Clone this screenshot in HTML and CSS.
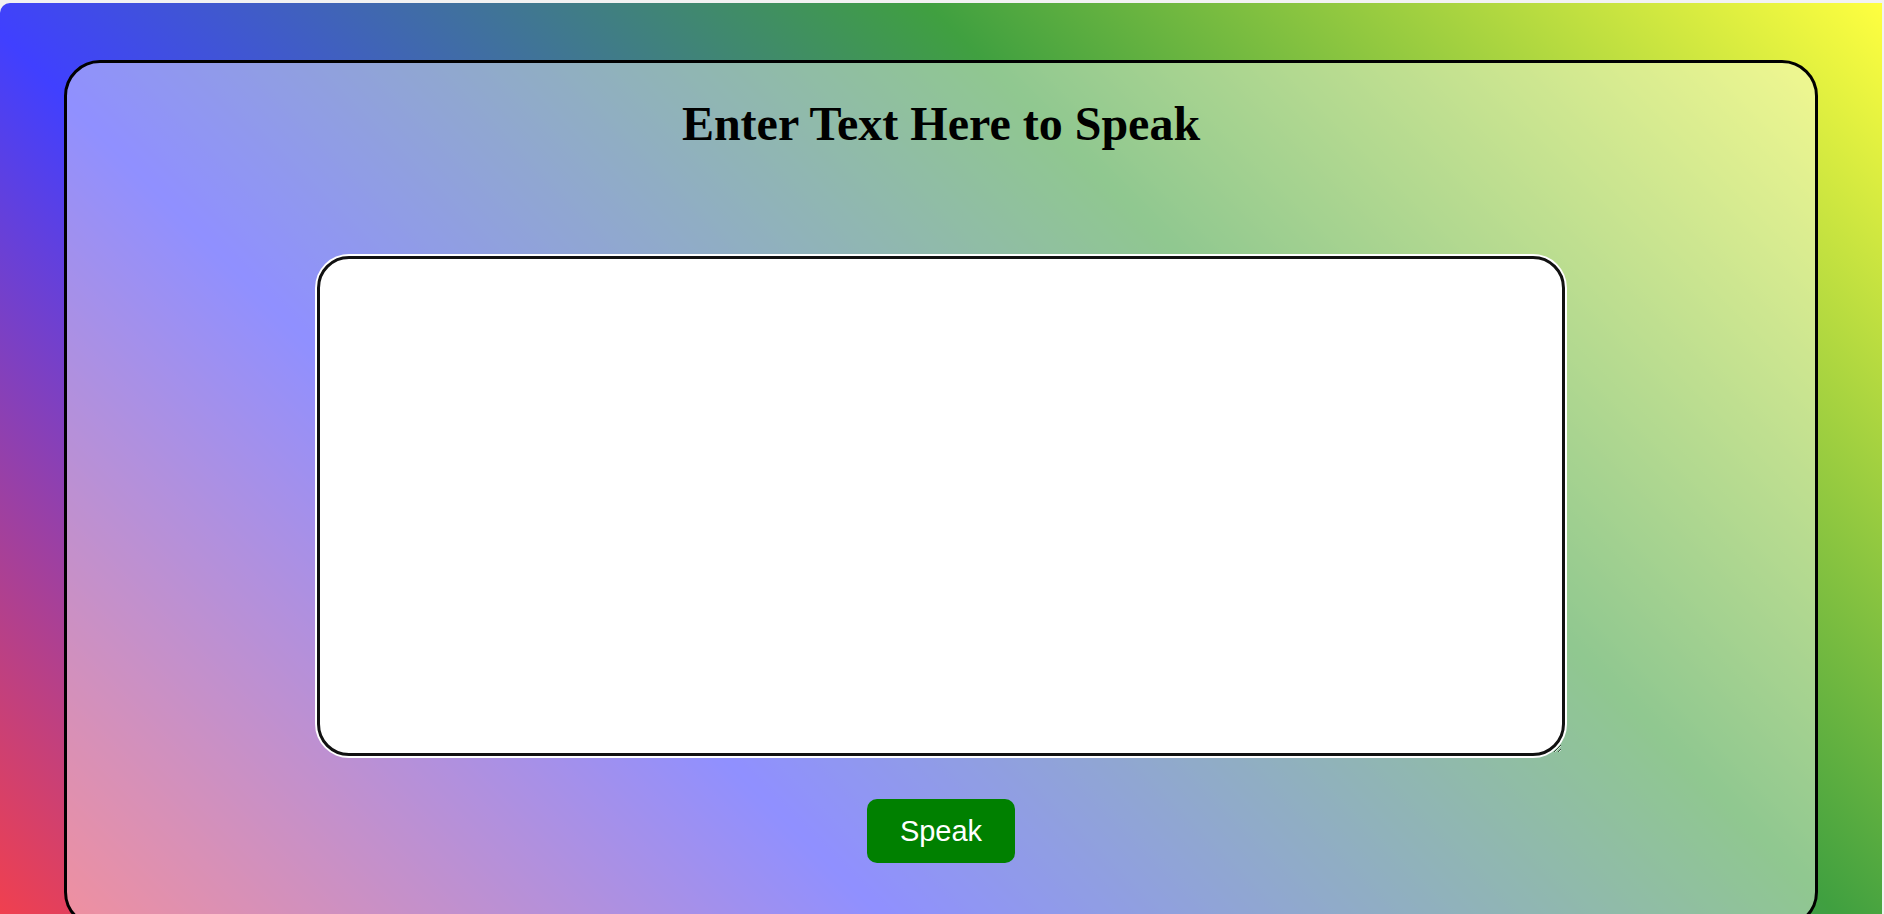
FILE: index.html
```html
<!DOCTYPE html>
<html lang="en">
<head>
<meta charset="utf-8">
<title>Text to Speech</title>
<link rel="stylesheet" href="styles.css">
</head>
<body>
<div class="page">
  <main class="card">
    <h1 class="title">Enter Text Here to Speak</h1>
    <textarea class="text-input" autofocus></textarea>
    <button class="speak-btn" type="button">Speak</button>
  </main>
</div>
</body>
</html>
```

FILE: styles.css
```css
html, body {
  margin: 0;
  padding: 0;
}

body {
  background: #f2f2f2;
  font-family: "Liberation Serif", "Times New Roman", serif;
}

.page {
  margin: 3px 2px 0 0;
  padding: 57px 64px 60px;
  border-radius: 10px 0 0 0;
  background: linear-gradient(45deg,
    rgba(255, 0, 0, 0.75),
    rgba(0, 0, 255, 0.75),
    rgba(0, 128, 0, 0.75),
    rgba(255, 255, 0, 0.75)), #ffffff;
}

.card {
  box-sizing: border-box;
  height: 868px;
  border: 3px solid #000;
  border-radius: 36px;
  background: rgba(255, 255, 255, 0.42);
  display: flex;
  flex-direction: column;
  align-items: center;
}

.title {
  margin: 33px 0 0;
  font-size: 48px;
  line-height: 56px;
  font-weight: bold;
  color: #000;
  font-family: "Liberation Serif", "Times New Roman", serif;
}

.text-input {
  box-sizing: border-box;
  margin-top: 104px;
  width: 1248px;
  height: 500px;
  padding: 22px 22px;
  border: 3px solid #111;
  border-radius: 32px;
  box-shadow: 0 0 0 2px #ffffff;
  background: #fff;
  outline: none;
  font-family: "Liberation Sans", Arial, sans-serif;
  font-size: 18px;
  color: #000;
  caret-color: #000;
}

.speak-btn {
  margin-top: 43px;
  padding: 15px 33px;
  border: none;
  border-radius: 10px;
  background: #008000;
  color: #fff;
  font-family: "Liberation Sans", Arial, sans-serif;
  font-size: 29px;
  line-height: 34px;
  cursor: pointer;
}
```
